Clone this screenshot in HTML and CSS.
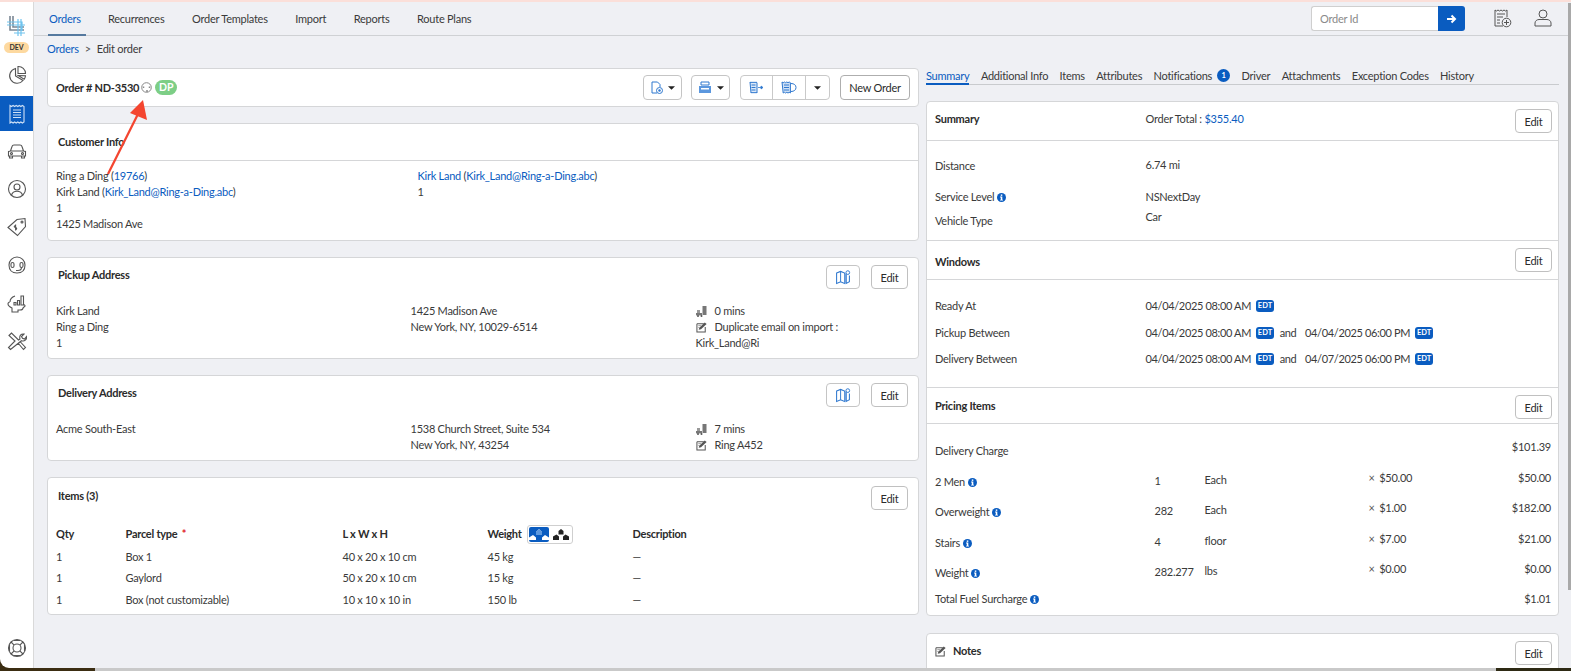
FILE: index.html
```html
<!DOCTYPE html>
<html lang="en">
<head>
<meta charset="utf-8">
<title>Edit order</title>
<link rel="stylesheet" href="styles.css">
</head>
<body>
<svg class="defs" xmlns="http://www.w3.org/2000/svg">
  <symbol id="i-info" viewBox="0 0 10 10"><circle cx="5" cy="5" r="5" fill="#0a5cc0"/><rect x="4.2" y="1.6" width="1.7" height="1.6" fill="#fff"/><path d="M3.4 4h2.5v3.4h.8v1H3.4v-1h.8V5h-.8z" fill="#fff"/></symbol>
  <symbol id="i-map" viewBox="0 0 20 20"><path d="M2 5l5-2 5 2v13l-5-2-5 2z" fill="none" stroke="#2f78cf" stroke-width="1.3"/><path d="M7 3v13" stroke="#2f78cf" stroke-width="1.2"/><path d="M12 6l2-.8V18l-2 0z" fill="#8db5e6"/><path d="M14 6v12l4-2V8" fill="none" stroke="#2f78cf" stroke-width="1.3"/><circle cx="16" cy="4.5" r="2.3" fill="#fff" stroke="#2f78cf" stroke-width="1.2"/></symbol>
  <symbol id="i-dolly" viewBox="0 0 12 12"><rect x="6.5" y="1" width="4" height="9" fill="#777"/><path d="M0 8h6v2.4H0z" fill="#777"/><path d="M1 5h3v3H1z" fill="#999"/><circle cx="2" cy="11" r="1" fill="#555"/><circle cx="5.5" cy="11" r="1" fill="#555"/></symbol>
  <symbol id="i-note" viewBox="0 0 13 13"><path d="M1 3h7.500M1 3v9h9V6.500" fill="none" stroke="#555" stroke-width="1.1"/><path d="M3 9.500l.5-2.200L9.500 1.500l2 1.800-6 5.700z" fill="#555"/><path d="M2.500 5h3M2.500 7h1.500" stroke="#999"/></symbol>
  <symbol id="i-caret" viewBox="0 0 8 4"><path d="M0 0h8L4 4z" fill="#222"/></symbol>
</svg>

<div class="top-line"></div>
<div class="app">
  <aside class="sidebar">
    <div class="logo">
      <svg width="20" height="22" viewBox="0 0 20 22"><path d="M4 1v14h14M7 1v11h11" fill="none" stroke="#7b8794" stroke-width="1.600"/><path d="M1 7h15v9M1 10h18M12 4v17M15 4v17M8 18h11" fill="none" stroke="#6fc3ee" stroke-width="1.200"/></svg>
    </div>
    <div class="dev">DEV</div>
    <a class="side-item"><svg width="20" height="20" viewBox="0 0 20 20" class="side-svg"><path d="M8.500 3.500a7.500 7.500 0 1 0 7.500 12L8.500 11z"/><path d="M11 1.500a7 7 0 0 1 7.500 7H11zM11 10.500l7.500.3a8 8 0 0 1-1.300 3.500z"/></svg></a>
    <a class="side-item active"><svg width="18" height="20" viewBox="0 0 18 20" class="side-svg light"><path d="M2 1.500l1.500 1 1.600-1 1.500 1 1.600-1 1.600 1 1.500-1 1.600 1 1.500-1 1.600 1V18l-1.600 1-1.500-1-1.600 1-1.500-1-1.600 1-1.600-1-1.500 1-1.600-1L2 19z"/><path d="M5 6h8M5 8.500h8M5 11h8M5 13.500h8"/></svg></a>
    <a class="side-item"><svg width="20" height="16" viewBox="0 0 20 16" class="side-svg"><path d="M1.500 8.500l2-.5 1.500-4.500c.3-1 1-1.500 2-1.500h6c1 0 1.700.5 2 1.500L16.500 8l2 .5V13h-17zM4 8h12"/><path d="M2.500 13v2h3v-2M14.500 13v2h3v-2"/><circle cx="4.500" cy="10.500" r="1"/><circle cx="15.500" cy="10.500" r="1"/></svg></a>
    <a class="side-item"><svg width="20" height="20" viewBox="0 0 20 20" class="side-svg"><circle cx="10" cy="10" r="8.500"/><circle cx="10" cy="8" r="3"/><path d="M4.500 16c1-3 3-3.800 5.500-3.800s4.500.8 5.500 3.800"/></svg></a>
    <a class="side-item"><svg width="20" height="20" viewBox="0 0 20 20" class="side-svg"><path d="M1 10.500L10 2.500l8-1 .5 8-8 9z"/><circle cx="15" cy="5" r="1"/><path d="M8.500 8.500c-1.500 0-1.800 2 0 2 1.600 0 1.600 2 0 2M8.600 7.500v6"/></svg></a>
    <a class="side-item"><svg width="20" height="20" viewBox="0 0 20 20" class="side-svg"><path d="M2 10a8 8 0 0 1 16 0c0 5-3 8-8 8s-8-3-8-8z"/><rect x="4" y="7.500" width="3" height="5" rx="1.500"/><rect x="13" y="7.500" width="3" height="5" rx="1.500"/><path d="M14.500 12.500c0 2-1.500 3-3.500 3H9"/></svg></a>
    <a class="side-item"><svg width="20" height="20" viewBox="0 0 20 20" class="side-svg"><path d="M3 9c0-3 2-5 5-6M16 11c2 1 3 2 1 3l-1 1c0 2-1 2-3 2h-2v2H5v-4c-2-1-4-2-4-4 0-1 1-2 2-2"/><path d="M7 12V9.500h2V12zM10.500 12V7.500h2V12zM14 12V3h2.500v9z"/></svg></a>
    <a class="side-item"><svg width="20" height="20" viewBox="0 0 20 20" class="side-svg"><path d="M2 4.500l2.500-2.500 7 7 1.500-1c-1-3 1-5.500 4-5l-2.500 2.500 1 1.800 2 .7 2-2.500c.5 3-2 5.200-5 4.200L3.500 18.500 1.500 16.500 8 10 2 4.500zM11 12l5.500 6.500 2-2L13 10.500"/></svg></a>
    <a class="side-item help"><svg width="20" height="20" viewBox="0 0 20 20" class="side-svg"><circle cx="10" cy="10" r="8.500"/><circle cx="10" cy="10" r="4"/><path d="M4 4l3.200 3.200M16 4l-3.200 3.200M4 16l3.200-3.200M16 16l-3.200-3.200M7 2.500l6 0M2.500 7v6M17.500 7v6M7 17.500h6"/></svg></a>
  </aside>

  <main class="main">
    <header class="topbar">
      <nav class="top-tabs">
        <a class="top-tab current">Orders</a>
        <a class="top-tab">Recurrences</a>
        <a class="top-tab">Order Templates</a>
        <a class="top-tab">Import</a>
        <a class="top-tab">Reports</a>
        <a class="top-tab">Route Plans</a>
      </nav>
      <div class="top-search">
        <input class="order-input" placeholder="Order Id">
        <button class="go"><svg width="11" height="10" viewBox="0 0 11 10"><path d="M1 5h8M5.500 1.500L9 5 5.500 8.500" fill="none" stroke="#fff" stroke-width="2"/></svg></button>
      </div>
      <svg class="top-icon" width="18" height="19" viewBox="0 0 18 19"><path d="M1 1l1.500 1L4 1l1.500 1L7 1l1.500 1L10 1l1.500 1L13 1v7M9 17H1V1" fill="none" stroke="#555" stroke-width="1"/><path d="M3 5h8M3 8h6M3 11h3M3 14h3" stroke="#555"/><circle cx="12.500" cy="13.500" r="4.300" fill="none" stroke="#555"/><path d="M12.500 11v5M10 13.500h5" stroke="#555"/></svg>
      <svg class="top-icon user" width="18" height="18" viewBox="0 0 18 18"><circle cx="9" cy="5" r="4" fill="none" stroke="#555"/><path d="M1 17v-3c0-2 2-3.500 4-3.500h8c2 0 4 1.500 4 3.500v3z" fill="none" stroke="#555"/></svg>
    </header>
    <div class="crumbs"><a class="link">Orders</a><span class="sep">&gt;</span><span>Edit order</span></div>

    <div class="columns">
      <section class="col-left">
        <div class="card order-card">
          <strong class="order-no">Order # ND-3530</strong>
          <svg class="agent" width="11" height="11" viewBox="0 0 11 11"><circle cx="5.500" cy="5.500" r="4.800" fill="none" stroke="#888"/><path d="M2.500 6V4.500M8.500 6V4.500" stroke="#888" stroke-width="1.500"/><circle cx="6" cy="9" r="1" fill="#888"/></svg>
          <span class="dp">DP</span>
          <div class="order-actions">
            <button class="btn ic-btn b1"><svg width="12" height="13" viewBox="0 0 12 13"><path d="M1 1h5.500L9 3.500V6M1 1v11h5" fill="none" stroke="#2f78cf"/><circle cx="8.500" cy="9.500" r="3" fill="none" stroke="#2f78cf"/><circle cx="8.500" cy="9.500" r="1.200" fill="#2f78cf"/></svg><svg class="caret" width="7" height="4"><use href="#i-caret"/></svg></button>
            <button class="btn ic-btn b2"><svg width="14" height="13" viewBox="0 0 14 13"><path d="M3 1h8v3H3z" fill="none" stroke="#2f78cf"/><path d="M1 5h12v7H1z" fill="#5b97de"/><path d="M3 7h8v1.500H3z" fill="#fff"/></svg><svg class="caret" width="7" height="4"><use href="#i-caret"/></svg></button>
            <div class="btn-group">
              <button class="seg s1"><svg width="15" height="13" viewBox="0 0 15 13"><path d="M1 1l1 .7L3 1l1 .7L5 1l1 .7L7 1l1 .7V12l-1-.7-1 .7-1-.7-1 .7-1-.7-1 .7z" fill="#dbe8f8" stroke="#2f78cf"/><path d="M2.500 4h4M2.500 6.500h4M2.500 9h4" stroke="#2f78cf"/><path d="M9 6.500h4M12 5l2 1.500L12 8z" fill="#2f78cf" stroke="#2f78cf" stroke-width=".8"/></svg></button>
              <button class="seg s2"><svg width="17" height="13" viewBox="0 0 17 13"><path d="M1 1l1.200.7L3.400 1l1.200.7L5.800 1 7 1.700 8.200 1l1.200.7V12l-1.200-.7-1.200.7-1.200-.7-1.200.7-1.200-.7-1.200.7z" fill="#cfe0f5" stroke="#2f78cf"/><path d="M3 4h5M3 6.500h5M3 9h5" stroke="#2f78cf"/><path d="M10 2.500c3 0 5 1.500 5 4s-2 4-5 4" fill="none" stroke="#2f78cf"/></svg></button>
              <button class="seg s3"><svg class="caret solo" width="7" height="4"><use href="#i-caret"/></svg></button>
            </div>
            <button class="btn text-btn new-order">New Order</button>
          </div>
        </div>

        <div class="card customer-card">
          <h3 class="cust-head">Customer Info</h3>
          <div class="cust-body">
            <div class="cust-a">
              <div>Ring a Ding (<a class="link">19766</a>)</div>
              <div>Kirk Land (<a class="link">Kirk_Land@Ring-a-Ding.abc</a>)</div>
              <div>1</div>
              <div>1425 Madison Ave</div>
            </div>
            <div>
              <div><a class="link">Kirk Land</a> (<a class="link">Kirk_Land@Ring-a-Ding.abc</a>)</div>
              <div>1</div>
            </div>
          </div>
        </div>

        <div class="card addr-card pickup">
          <div class="card-head">
            <h3>Pickup Address</h3>
            <button class="btn map-btn"><svg width="16" height="16"><use href="#i-map"/></svg></button>
            <button class="btn edit">Edit</button>
          </div>
          <div class="addr-body">
            <div><div>Kirk Land</div><div>Ring a Ding</div><div>1</div></div>
            <div><div>1425 Madison Ave</div><div>New York, NY, 10029-6514</div></div>
            <div>
              <div class="meta"><svg width="12" height="12"><use href="#i-dolly"/></svg><span>0 mins</span></div>
              <div class="meta"><svg width="12" height="12"><use href="#i-note"/></svg><span>Duplicate email on import :</span></div>
              <div>Kirk_Land@Ri</div>
            </div>
          </div>
        </div>

        <div class="card addr-card delivery">
          <div class="card-head">
            <h3>Delivery Address</h3>
            <button class="btn map-btn"><svg width="16" height="16"><use href="#i-map"/></svg></button>
            <button class="btn edit">Edit</button>
          </div>
          <div class="addr-body">
            <div><div>Acme South-East</div></div>
            <div><div>1538 Church Street, Suite 534</div><div>New York, NY, 43254</div></div>
            <div>
              <div class="meta"><svg width="12" height="12"><use href="#i-dolly"/></svg><span>7 mins</span></div>
              <div class="meta"><svg width="12" height="12"><use href="#i-note"/></svg><span>Ring A452</span></div>
            </div>
          </div>
        </div>

        <div class="card items-card">
          <div class="card-head items-head"><h3>Items (3)</h3><button class="btn edit">Edit</button></div>
          <div class="items-table">
            <div class="it-row it-head">
              <div>Qty</div><div>Parcel type <span class="req">*</span></div><div>L x W x H</div>
              <div class="weight-head">Weight
                <span class="toggle">
                  <span class="tog on"><svg width="20" height="12" viewBox="0 0 20 12"><path d="M10 1l3 3v3H7V4zM4 7l3 2.500V12H0V9.500zM16 7l4 2.500V12h-7V9.500z" fill="#fff"/><path d="M10 1l3 3v3H7V4z" fill="#5c98de"/></svg></span>
                  <span class="tog"><svg width="16" height="12" viewBox="0 0 16 12"><path d="M8 1l2.500 2v3.500h-5V3zM3.500 6.500L6 8.500V12H0V8.500zM12.500 6.500L16 8.500V12h-6V8.500z" fill="#222"/></svg></span>
                </span>
              </div>
              <div>Description</div>
            </div>
            <div class="it-row"><div>1</div><div>Box 1</div><div>40 x 20 x 10 cm</div><div>45 kg</div><div>—</div></div>
            <div class="it-row"><div>1</div><div>Gaylord</div><div>50 x 20 x 10 cm</div><div>15 kg</div><div>—</div></div>
            <div class="it-row"><div>1</div><div>Box (not customizable)</div><div>10 x 10 x 10 in</div><div>150 lb</div><div>—</div></div>
          </div>
        </div>
      </section>

      <section class="col-right">
        <nav class="sub-tabs">
          <a class="sub-tab current">Summary</a>
          <a class="sub-tab">Additional Info</a>
          <a class="sub-tab">Items</a>
          <a class="sub-tab">Attributes</a>
          <a class="sub-tab">Notifications <span class="count">1</span></a>
          <a class="sub-tab">Driver</a>
          <a class="sub-tab">Attachments</a>
          <a class="sub-tab">Exception Codes</a>
          <a class="sub-tab">History</a>
        </nav>

        <div class="card summary-card">
          <div class="sec-head h-summary"><h3>Summary</h3><span class="total">Order Total : <a class="link">$355.40</a></span><button class="btn edit">Edit</button></div>
          <div class="sec-body b-summary">
            <div class="kv"><div>Distance</div><div class="up1">6.74 mi</div></div>
            <div class="kv gap9"><div>Service Level <svg class="info" width="9" height="9"><use href="#i-info"/></svg></div><div>NSNextDay</div></div>
            <div class="kv gap2"><div>Vehicle Type</div><div class="up4">Car</div></div>
          </div>

          <div class="sec-head h-windows"><h3>Windows</h3><button class="btn edit">Edit</button></div>
          <div class="sec-body b-windows">
            <div class="kv win"><div>Ready At</div><div class="dates"><span>04/04/2025 08:00 AM</span><span class="tz">EDT</span></div></div>
            <div class="kv win"><div>Pickup Between</div><div class="dates"><span>04/04/2025 08:00 AM</span><span class="tz">EDT</span><span class="and">and</span><span>04/04/2025 06:00 PM</span><span class="tz">EDT</span></div></div>
            <div class="kv win"><div>Delivery Between</div><div class="dates"><span>04/04/2025 08:00 AM</span><span class="tz">EDT</span><span class="and">and</span><span>04/07/2025 06:00 PM</span><span class="tz">EDT</span></div></div>
          </div>

          <div class="sec-head h-pricing"><h3>Pricing Items</h3><button class="btn edit">Edit</button></div>
          <div class="b-pricing">
            <div class="pr"><div>Delivery Charge</div><div></div><div></div><div></div><div class="amt up5">$101.39</div></div>
            <div class="pr"><div>2 Men <svg class="info" width="9" height="9"><use href="#i-info"/></svg></div><div class="up1">1</div><div class="up2">Each</div><div class="up5"><span class="times">×</span> $50.00</div><div class="amt up5">$50.00</div></div>
            <div class="pr"><div>Overweight <svg class="info" width="9" height="9"><use href="#i-info"/></svg></div><div class="up1">282</div><div class="up2">Each</div><div class="up5"><span class="times">×</span> $1.00</div><div class="amt up5">$182.00</div></div>
            <div class="pr"><div>Stairs <svg class="info" width="9" height="9"><use href="#i-info"/></svg></div><div class="up1">4</div><div class="up2">floor</div><div class="up5"><span class="times">×</span> $7.00</div><div class="amt up5">$21.00</div></div>
            <div class="pr"><div>Weight <svg class="info" width="9" height="9"><use href="#i-info"/></svg></div><div class="up1">282.277</div><div class="up2">lbs</div><div class="up5"><span class="times">×</span> $0.00</div><div class="amt up5">$0.00</div></div>
            <div class="pr fuel"><div>Total Fuel Surcharge <svg class="info" width="9" height="9"><use href="#i-info"/></svg></div><div></div><div></div><div></div><div class="amt">$1.01</div></div>
          </div>
        </div>

        <div class="card notes-card">
          <div class="sec-head h-notes"><h3><svg class="note-ic" width="12" height="12"><use href="#i-note"/></svg>Notes</h3><button class="btn edit">Edit</button></div>
        </div>
      </section>
    </div>
  </main>

  <div class="arrow">
    <svg width="60" height="90" viewBox="0 0 60 90"><path d="M4 86L34 26" stroke="#f4452f" stroke-width="2.200" fill="none"/><path d="M39 12L43 32 26 25z" fill="#f4452f"/></svg>
  </div>
  <div class="scrollbar"></div>
</div>
<div class="bottom-strip"><span class="dark-a"></span><span class="grey"></span><span class="dark-b"></span></div>
</body>
</html>
```

FILE: styles.css
```css
* { box-sizing: border-box; }
html, body { margin: 0; height: 671px; overflow: hidden; }
body { font-family: "Lato", sans-serif; font-size: 11px; letter-spacing: -0.25px; line-height: 16px; color: #3a3a3a; background: #eff0f4; }
h3 { margin: 0; font-size: 11px; font-weight: 700; color: #2b2b2b; line-height: 20px; }
a { text-decoration: none; }
button { font-family: inherit; letter-spacing: inherit; }
.defs { display: none; }
.link { color: #0a5cc0; }

.top-line { height: 2px; background: #fbdfd9; }
.app { position: relative; display: flex; height: 666px; background: #3b2d12; }

.sidebar { width: 34px; flex: none; display: flex; flex-direction: column; background: #fff; border-right: 1px solid #d9d9d9; border-bottom-left-radius: 9px; }
.logo { height: 37px; display: flex; align-items: flex-end; justify-content: center; padding-right: 1px; padding-bottom: 2px; }
.dev { margin: 3px 0 3px 4px; width: 25px; height: 11px; border-radius: 6px; background: #fdd9a0; color: #333; font-size: 7px; font-weight: 700; letter-spacing: 0; line-height: 11px; text-align: center; }
.side-item { height: 38px; display: flex; align-items: center; justify-content: center; }
.side-item.active { height: 35px; margin: 2px 0 1px; background: #0a5cc0; }
.side-item.help { margin-top: auto; margin-bottom: 1px; }
.side-svg { fill: none; stroke: #555; stroke-width: 1.1; }
.side-svg.light { stroke: #cfe1f6; }

.main { flex: 1; min-width: 0; padding-left: 13px; background: #eff0f4; overflow: hidden; }
.topbar { height: 34px; margin-left: -13px; padding: 4px 0 0 14px; display: flex; align-items: flex-start; border-bottom: 1px solid #cfd1d4; }
.top-tabs { display: flex; flex: 1; height: 30px; }
.top-tab { height: 30px; padding: 5px 0 0 1px; margin-right: 26.600px; color: #3a3a3a; }
.top-tab.current { color: #0a5cc0; width: 38px; margin-right: 21px; border-bottom: 2px solid #55799f; }
.top-search { display: flex; margin-right: 29px; }
.order-input { width: 127px; height: 25px; padding: 0 8px; border: 1px solid #cfcfcf; border-right: 0; border-radius: 3px 0 0 3px; background: #fff; font: 11px "Lato", sans-serif; letter-spacing: -0.25px; }
.order-input::placeholder { color: #8a8a8a; }
.go { width: 27px; height: 25px; padding: 0; border: 0; border-radius: 0 3px 3px 0; background: #0a5cc0; }
.top-icon { margin: 3px 0 0; }
.top-icon.user { margin-left: 22px; margin-right: 19px; }

.crumbs { height: 32px; padding-top: 5px; display: flex; gap: 6px; }
.sep { color: #555; }

.columns { display: flex; gap: 7px; align-items: flex-start; }
.col-left { width: 872px; flex: none; display: flex; flex-direction: column; gap: 16px; }
.col-right { width: 633px; flex: none; display: flex; flex-direction: column; }

.card { background: #fff; border: 1px solid #d5d6d8; border-radius: 4px; }
.btn { height: 24px; padding: 0; background: #fff; border: 1px solid #c5c5c5; border-radius: 4px; color: #2b2b2b; font-size: 11px; }
.edit { width: 37px; flex: none; border-color: #c0c0c0; }

.order-card { height: 39px; display: flex; align-items: center; padding: 0 8px; }
.order-no { font-weight: 700; color: #2b2b2b; }
.agent { margin-left: 2px; }
.dp { margin-left: 3px; width: 22px; height: 15px; border-radius: 8px; background: #7dce86; color: #fff; font-size: 10.5px; font-weight: 700; letter-spacing: 0; line-height: 15px; text-align: center; }
.order-actions { margin-left: auto; display: flex; align-items: center; }
.ic-btn { height: 25px; display: flex; align-items: center; justify-content: center; gap: 5px; }
.b1 { width: 39px; margin-right: 9px; }
.b2 { width: 39px; margin-right: 10px; }
.btn-group { display: flex; height: 25px; border: 1px solid #c9c9c9; border-radius: 4px; margin-right: 10px; background: #fff; }
.seg { height: 23px; padding: 0; border: 0; border-right: 1px solid #c9c9c9; background: transparent; display: flex; align-items: center; justify-content: center; }
.s1 { width: 32px; }
.s2 { width: 33px; }
.s3 { width: 23px; border-right: 0; }
.new-order { width: 70px; height: 25px; border-color: #aeaeae; }

.customer-card { height: 118px; }
.cust-head { height: 37px; padding: 8px 0 0 10px; border-bottom: 1px solid #d5d6d8; }
.cust-body { display: grid; grid-template-columns: 361.5px 1fr; padding: 7px 8px 0; }

.pickup { height: 102px; }
.delivery { height: 86px; }
.items-card { height: 138px; }
.card-head { display: flex; align-items: flex-start; padding: 7px 10px 0; }
.card-head h3 { flex: 1; }
.items-head { padding-top: 8px; }
.map-btn { width: 34px; margin-right: 11px; display: flex; align-items: center; justify-content: center; }
.addr-body { display: grid; grid-template-columns: 354.500px 285px 1fr; padding: 14px 8px 0; }
.meta { display: flex; gap: 7px; align-items: center; }

.items-table { padding: 13px 8px 0; }
.it-row { display: grid; grid-template-columns: 69.500px 217px 145px 145px 1fr; height: 21.500px; align-items: center; }
.it-head { height: 22px; margin-bottom: 1px; font-weight: 700; color: #2b2b2b; }
.req { color: #e0202a; margin-left: 2px; }
.weight-head { display: flex; align-items: center; gap: 5px; }
.toggle { display: inline-flex; gap: 2px; height: 19px; padding: 1px; border: 1px solid #cfcfcf; border-radius: 3px; background: #fff; }
.tog { width: 20px; height: 15px; display: flex; align-items: center; justify-content: center; }
.tog.on { background: #0a5cc0; border-radius: 2px; }

.sub-tabs { height: 17px; display: flex; border-bottom: 1px solid #c9cbce; }
.sub-tab { height: 17px; margin-right: 11.400px; color: #3a3a3a; white-space: nowrap; display: flex; align-items: flex-start; }
.sub-tab.current { color: #0a5cc0; border-bottom: 2px solid #0a5cc0; }
.count { width: 13px; height: 13px; margin: 1px 0 0 5px; border-radius: 50%; background: #0a5cc0; color: #fff; font-size: 7.500px; font-weight: 700; letter-spacing: 0; line-height: 13px; text-align: center; }

.summary-card { height: 515px; margin-top: 16px; }
.sec-head { display: flex; align-items: flex-start; padding: 7px 6px 0 8px; border-bottom: 1px solid #d5d6d8; }
.sec-head h3 { flex: 1; }
.h-summary { height: 39px; }
.h-summary h3 { flex: none; width: 210.500px; }
.total { flex: 1; line-height: 20px; }
.h-windows { height: 39px; }
.h-windows h3 { margin-top: 4px; }
.h-pricing { height: 36px; }
.h-pricing h3 { margin-top: 1px; }
.sec-body { padding: 14px 8px 0; border-bottom: 1px solid #d5d6d8; }
.b-summary { height: 100px; }
.b-windows { height: 108px; padding-top: 13px; }
.kv { display: grid; grid-template-columns: 210.500px 1fr; height: 22px; line-height: 22px; }
.gap9 { margin-top: 9px; }
.gap2 { margin-top: 2px; }
.win { height: 26.500px; line-height: 26.500px; }
.dates { display: flex; align-items: center; letter-spacing: -0.35px; }
.tz { margin-left: 5px; width: 18px; height: 12px; border-radius: 3px; background: #0a5cc0; color: #fff; font-size: 7.500px; font-weight: 700; letter-spacing: 0; line-height: 12px; text-align: center; }
.and { margin: 0 8px 0 5px; width: 18px; text-align: center; }
.info { vertical-align: -1px; margin-left: 0; }
.up1 { margin-top: -1px; }
.up2 { margin-top: -2px; }
.up4 { margin-top: -4px; }
.up5 { margin-top: -4px; }

.b-pricing { padding: 16px 7px 0 8px; }
.pr { display: grid; grid-template-columns: 219.500px 50px 164px 1fr 90px; height: 30.500px; line-height: 22px; }
.pr.fuel { margin-top: -5px; }
.amt { text-align: right; }
.times { margin-right: 2px; color: #555; }

.notes-card { height: 60px; margin-top: 17px; }
.h-notes { border-bottom: 0; }
.note-ic { vertical-align: -2px; margin-right: 6px; }

.arrow { position: absolute; left: 104px; top: 86px; width: 60px; height: 90px; }
.scrollbar { position: absolute; right: 0; top: 1px; width: 3px; height: 587px; background: #a9a9a9; }

.bottom-strip { height: 3px; display: flex; }
.dark-a { width: 95px; background: #3b2d12; }
.grey { flex: 1; background: #c9c9c9; }
.dark-b { width: 75px; background: #2e2a14; }
```
